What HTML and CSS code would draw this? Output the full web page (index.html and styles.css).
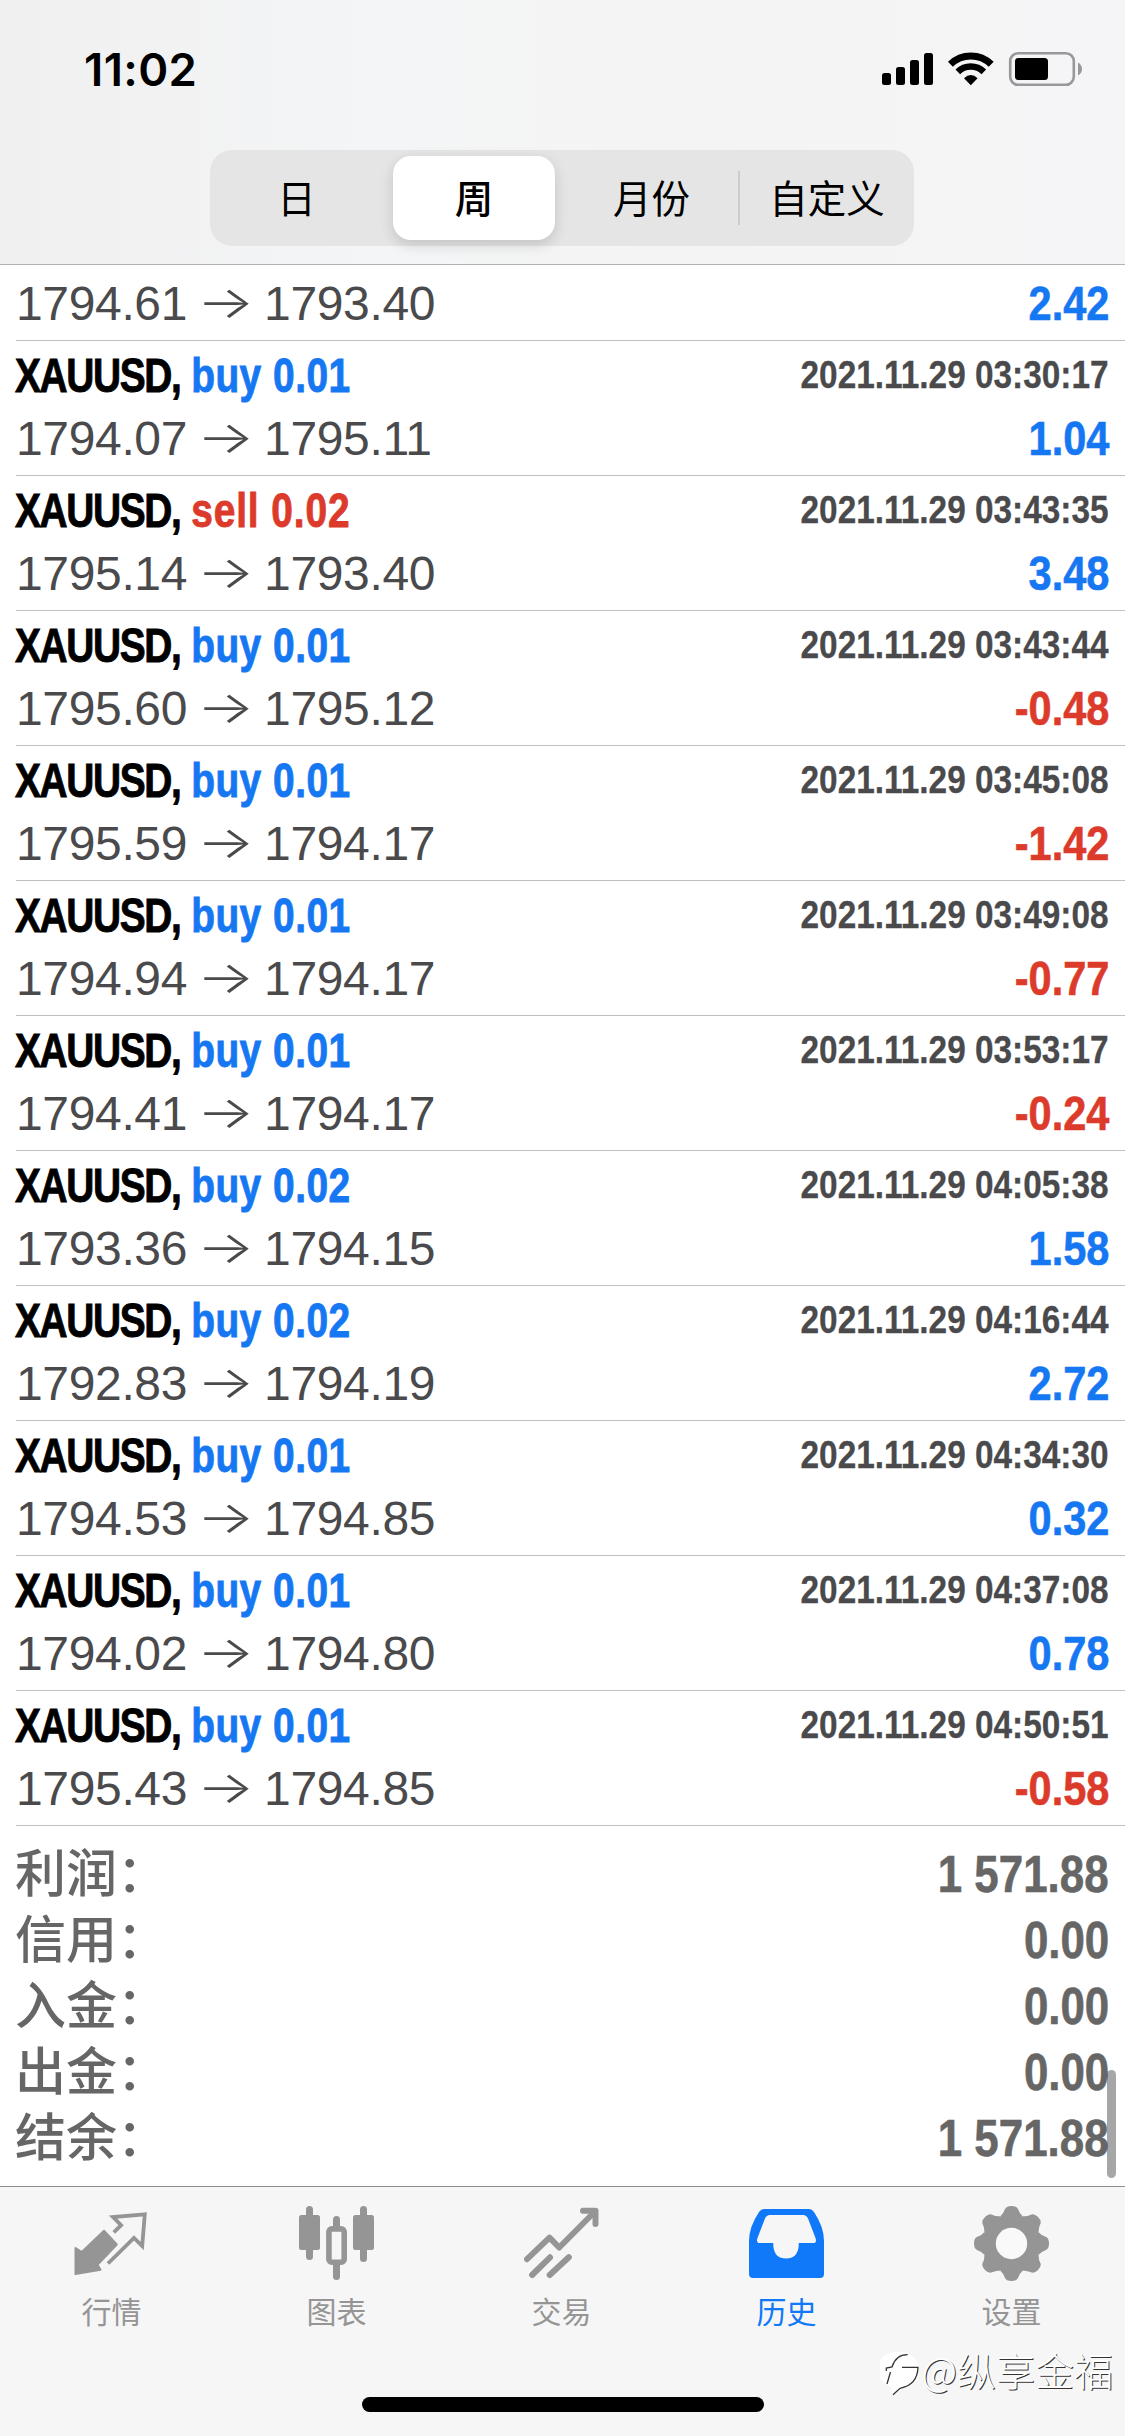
FILE: index.html
```html
<!DOCTYPE html>
<html lang="zh-CN">
<head>
<meta charset="utf-8">
<title>历史</title>
<link rel="stylesheet" href="styles.css">
</head>
<body>
<div class="screen">
  <header class="header">
    <div class="status">
      <span class="time">11:02</span>
      <svg class="status-icons" width="206" height="40" viewBox="878 49 206 40">
        <g>
          <rect x="882" y="73" width="9" height="12" rx="2.5"/>
          <rect x="896" y="67" width="9" height="18" rx="2.5"/>
          <rect x="910" y="60" width="9" height="25" rx="2.5"/>
          <rect x="924" y="53" width="9" height="32" rx="2.5"/>
        </g>
        <g fill="none" stroke="#000">
          <path stroke-width="7" d="M950.4 64.2A29.2 29.2 0 0 1 991.2 64.2"/>
          <path stroke-width="6.6" d="M957.8 71.8A18.6 18.6 0 0 1 983.8 71.8"/>
        </g>
        <path d="M970.8 85.2L964 78.2Q970.8 71.8 977.6 78.2Z"/>
        <rect x="1010.2" y="53.2" width="63.6" height="31.6" rx="8" fill="none" stroke="#98989a" stroke-width="2.6"/>
        <rect x="1015" y="58" width="33" height="22" rx="3.5"/>
        <path d="M1078 62.5Q1082 65 1082 69T1078 75.500Z" fill="#98989a"/>
      </svg>
    </div>
    <nav class="segments">
      <span class="segment">日</span>
      <span class="segment selected">周</span>
      <span class="segment month">月份</span>
      <span class="segment divided">自定义</span>
    </nav>
  </header>

  <main class="history">
    <section class="deal clipped"><div class="line"><div class="price">1794.61<i>→</i>1793.40</div><b class="amount up">2.42</b></div></section>
    <section class="deal"><div class="line"><div class="head"><span>XAUUSD,</span> <em class="buy">buy 0.01</em></div><time>2021.11.29 03:30:17</time></div><div class="line"><div class="price">1794.07<i>→</i>1795.11</div><b class="amount up">1.04</b></div></section>
    <section class="deal"><div class="line"><div class="head"><span>XAUUSD,</span> <em class="sell">sell 0.02</em></div><time>2021.11.29 03:43:35</time></div><div class="line"><div class="price">1795.14<i>→</i>1793.40</div><b class="amount up">3.48</b></div></section>
    <section class="deal"><div class="line"><div class="head"><span>XAUUSD,</span> <em class="buy">buy 0.01</em></div><time>2021.11.29 03:43:44</time></div><div class="line"><div class="price">1795.60<i>→</i>1795.12</div><b class="amount down">-0.48</b></div></section>
    <section class="deal"><div class="line"><div class="head"><span>XAUUSD,</span> <em class="buy">buy 0.01</em></div><time>2021.11.29 03:45:08</time></div><div class="line"><div class="price">1795.59<i>→</i>1794.17</div><b class="amount down">-1.42</b></div></section>
    <section class="deal"><div class="line"><div class="head"><span>XAUUSD,</span> <em class="buy">buy 0.01</em></div><time>2021.11.29 03:49:08</time></div><div class="line"><div class="price">1794.94<i>→</i>1794.17</div><b class="amount down">-0.77</b></div></section>
    <section class="deal"><div class="line"><div class="head"><span>XAUUSD,</span> <em class="buy">buy 0.01</em></div><time>2021.11.29 03:53:17</time></div><div class="line"><div class="price">1794.41<i>→</i>1794.17</div><b class="amount down">-0.24</b></div></section>
    <section class="deal"><div class="line"><div class="head"><span>XAUUSD,</span> <em class="buy">buy 0.02</em></div><time>2021.11.29 04:05:38</time></div><div class="line"><div class="price">1793.36<i>→</i>1794.15</div><b class="amount up">1.58</b></div></section>
    <section class="deal"><div class="line"><div class="head"><span>XAUUSD,</span> <em class="buy">buy 0.02</em></div><time>2021.11.29 04:16:44</time></div><div class="line"><div class="price">1792.83<i>→</i>1794.19</div><b class="amount up">2.72</b></div></section>
    <section class="deal"><div class="line"><div class="head"><span>XAUUSD,</span> <em class="buy">buy 0.01</em></div><time>2021.11.29 04:34:30</time></div><div class="line"><div class="price">1794.53<i>→</i>1794.85</div><b class="amount up">0.32</b></div></section>
    <section class="deal"><div class="line"><div class="head"><span>XAUUSD,</span> <em class="buy">buy 0.01</em></div><time>2021.11.29 04:37:08</time></div><div class="line"><div class="price">1794.02<i>→</i>1794.80</div><b class="amount up">0.78</b></div></section>
    <section class="deal"><div class="line"><div class="head"><span>XAUUSD,</span> <em class="buy">buy 0.01</em></div><time>2021.11.29 04:50:51</time></div><div class="line"><div class="price">1795.43<i>→</i>1794.85</div><b class="amount down">-0.58</b></div></section>

    <dl class="summary">
      <div><dt>利润：</dt><dd>1 571.88</dd></div>
      <div><dt>信用：</dt><dd>0.00</dd></div>
      <div><dt>入金：</dt><dd>0.00</dd></div>
      <div><dt>出金：</dt><dd>0.00</dd></div>
      <div><dt>结余：</dt><dd>1 571.88</dd></div>
    </dl>
    <div class="scrollbar"></div>
  </main>

  <footer class="footer">
    <nav class="tabs">
      <div class="tab">
        <svg viewBox="74.5 2204 76 80">
          <path d="M76 2274L76 2248L82.300 2252L104.500 2230.700L117.300 2244.500L98 2264.700L101 2269.800Z" stroke="#959595" stroke-width="2" stroke-linejoin="round"/>
          <path d="M114.300 2232.300L121.600 2225.200L113.500 2217L145.300 2214.300L142.700 2246L134.500 2238L108.500 2263.500" fill="none" stroke="#959595" stroke-width="3.8"/>
        </svg>
        <span>行情</span>
      </div>
      <div class="tab">
        <svg viewBox="299.500 2204 76 80">
          <rect x="299.500" y="2215" width="21" height="35" rx="2.500"/><rect x="306.500" y="2206" width="7" height="54" rx="3.500"/>
          <rect x="353.500" y="2215" width="21" height="35" rx="2.500"/><rect x="360.500" y="2206" width="7" height="56" rx="3.500"/>
          <rect x="333.500" y="2216" width="7" height="15" rx="3.500"/><rect x="333.500" y="2260" width="7" height="20" rx="3.500"/>
          <rect x="329.400" y="2228.900" width="15.300" height="33.300" rx="3" fill="none" stroke="#959595" stroke-width="5.600"/>
        </svg>
        <span>图表</span>
      </div>
      <div class="tab">
        <svg viewBox="524.500 2204 76 80">
          <g fill="none" stroke="#959595" stroke-width="6" stroke-linecap="round" stroke-linejoin="round">
            <path d="M527.500 2259.200L550 2237.700L559.700 2247.500L595.500 2211.500"/>
            <path d="M583.500 2210.800H596V2224"/>
            <path d="M532.600 2275L550.500 2257.300M550.200 2275L569.300 2257.300"/>
          </g>
        </svg>
        <span>交易</span>
      </div>
      <div class="tab active">
        <svg viewBox="749 2204 76 80">
          <path fill-rule="evenodd" d="M764 2209H809Q812 2209 814 2212Q824 2227 824 2241V2274Q824 2278 820 2278H753Q749 2278 749 2274V2241Q749 2227 759 2212Q761 2209 764 2209ZM770 2215Q766.500 2215 765 2218.500L757.500 2238Q755.800 2243 760 2243H773.300V2246Q774.500 2258.500 786 2258.500T798.700 2246V2243H813Q817.200 2243 815.500 2238L808 2218.500Q806.500 2215 803 2215Z"/>
        </svg>
        <span>历史</span>
      </div>
      <div class="tab">
        <svg viewBox="974 2204 76 80">
          <defs><path id="tooth" d="M1000.500 2216Q1003.500 2213.500 1004.800 2209.500Q1006 2206 1011.500 2206T1018.200 2209.500Q1019.500 2213.500 1022.500 2216V2243H1000.500Z"/></defs>
          <circle cx="1011.500" cy="2243.500" r="29"/>
          <use href="#tooth"/>
          <use href="#tooth" transform="rotate(45 1011.500 2243.500)"/>
          <use href="#tooth" transform="rotate(90 1011.500 2243.500)"/>
          <use href="#tooth" transform="rotate(135 1011.500 2243.500)"/>
          <use href="#tooth" transform="rotate(180 1011.500 2243.500)"/>
          <use href="#tooth" transform="rotate(225 1011.500 2243.500)"/>
          <use href="#tooth" transform="rotate(270 1011.500 2243.500)"/>
          <use href="#tooth" transform="rotate(315 1011.500 2243.500)"/>
          <circle cx="1011.500" cy="2243.500" r="15.700" fill="#f9f9f9"/>
        </svg>
        <span>设置</span>
      </div>
    </nav>
    <div class="home-bar"></div>
    <div class="watermark">
      <svg width="42" height="48" viewBox="878 2352 42 48">
        <path d="M897.500 2355A18.500 18 0 0 1 900 2391L890 2399L889 2390A18.500 18 0 0 1 897.500 2355Z" fill="#fff"/>
        <path d="M905.700 2357.700Q894 2357.500 890 2370L884.300 2371V2374M888.500 2375L885 2387M900 2370.300H916Q915.500 2388 898 2391.300L891 2397.700" fill="none" stroke="#333" stroke-width="1.300"/>
      </svg>
      <span>@纵享金福</span>
    </div>
  </footer>
</div>
</body>
</html>
```
FILE: styles.css
```css
* { box-sizing: border-box; }

body {
  margin: 0;
  background: #fff;
  font-family: "Liberation Sans", "Noto Sans CJK SC", sans-serif;
}

.screen {
  width: 1125px;
  height: 2436px;
  display: flex;
  flex-direction: column;
  overflow: hidden;
}

/* Header */
.header {
  height: 265px;
  flex: none;
  background: linear-gradient(90deg, #f0f0f1, #f4f5f6 35%, #f4f4f4 60%, #f5f5f7);
  border-bottom: 1px solid #b2b2b3;
}

.status {
  height: 150px;
  padding: 49px 41px 0 84px;
  display: flex;
  justify-content: space-between;
  align-items: flex-start;
}

.time {
  font: 600 45.500px/41px Inter, sans-serif;
  letter-spacing: .4px;
}

.segments {
  width: 704px;
  height: 96px;
  margin-left: 210px;
  display: grid;
  grid-template-columns: repeat(4, 1fr);
  align-items: center;
  background: #e5e5e6;
  border-radius: 22px;
}

.segment {
  height: 84px;
  padding-right: 3px;
  line-height: 81px;
  text-align: center;
  font-family: "Noto Sans CJK SC", sans-serif;
  font-size: 38.500px;
}

.segment.selected {
  margin: 0 7px;
  padding: 0;
  background: #fff;
  border-radius: 18px;
  font-weight: 500;
  box-shadow: 0 5px 14px rgba(0, 0, 0, .15);
}

.segment.month { padding: 0 0 0 3px; }

.segment.divided {
  height: 54px;
  line-height: 51px;
  border-left: 2px solid #cdcdce;
  padding: 0;
}

/* Deals */
.history {
  flex: 1;
  position: relative;
}

.deal {
  height: 135px;
  margin-left: 16px;
  padding: 3px 16px 5px 0;
  border-bottom: 1px solid #c0c0c2;
}

.deal.clipped {
  height: 76px;
  padding-top: 7px;
}

.line {
  height: 63px;
  line-height: 63px;
  display: flex;
  justify-content: space-between;
  font-size: 48px;
  white-space: nowrap;
}

.head {
  margin-left: -1px;
  font-weight: 700;
  transform: scaleX(.81);
  transform-origin: left;
  -webkit-text-stroke: .9px;
}

.head span { letter-spacing: -1.7px; }
.head em { font-style: normal; letter-spacing: .6px; }
.head .sell { letter-spacing: 1.1px; }

.buy, .up { color: #1677f2; }
.sell, .down { color: #dc3b2c; }

.line time {
  color: #4a4a4d;
  font-size: 39.500px;
  font-weight: 700;
  line-height: 61px;
  transform: scaleX(.845);
  transform-origin: right;
  -webkit-text-stroke: .3px;
}

.price {
  display: flex;
  color: #4a4a4d;
  letter-spacing: -.35px;
}

.price i {
  width: 77px;
  text-align: center;
  font: 300 44px/61px Inter, sans-serif;
  transform: scaleX(1.38);
}

.amount {
  transform: scaleX(.865);
  transform-origin: right;
  -webkit-text-stroke: .6px;
}

/* Summary */
.summary {
  margin: 0;
  padding: 14px 16px 0 15px;
  color: #666;
}

.summary div {
  height: 66px;
  display: flex;
  justify-content: space-between;
}

.summary dt {
  font: 500 51px/61px "Noto Sans CJK SC", sans-serif;
}

.summary dd {
  margin: 0;
  font-size: 51px;
  font-weight: 700;
  line-height: 69px;
  transform: scaleX(.86);
  transform-origin: right;
  -webkit-text-stroke: .6px;
}

.scrollbar {
  position: absolute;
  right: 9px;
  bottom: 8px;
  width: 9px;
  height: 108px;
  border-radius: 5px;
  background: rgba(0, 0, 0, .35);
}

/* Tab bar */
.footer {
  height: 250px;
  flex: none;
  position: relative;
  background: #f6f6f6;
  border-top: 1px solid #8f8f8f;
}

.tabs {
  height: 210px;
  margin: 0 1px 0 -1px;
  padding-top: 17px;
  display: grid;
  grid-template-columns: repeat(5, 1fr);
}

.tab {
  display: flex;
  flex-direction: column;
  align-items: center;
  color: #959595;
  font: 400 30px/44px "Noto Sans CJK SC", sans-serif;
}

.tab svg {
  width: 76px;
  height: 80px;
  margin-bottom: 4px;
  fill: currentColor;
}

.tab.active { color: #0f79f9; }

.home-bar {
  width: 402px;
  height: 15px;
  margin: 0 auto;
  border-radius: 8px;
  background: #000;
}

.watermark {
  position: absolute;
  right: 12px;
  top: 162px;
  display: flex;
  color: #fff;
  font: 300 39px/40px "Noto Sans CJK SC", sans-serif;
  text-shadow: 1px 1px 0 #333;
}
```
